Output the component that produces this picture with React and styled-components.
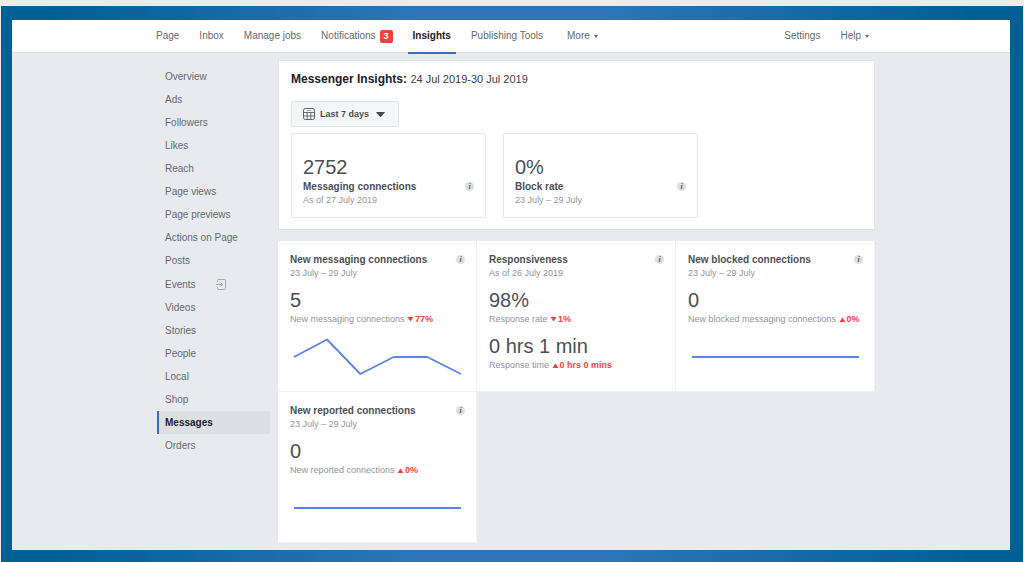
import React from "react";
import styled, { createGlobalStyle, css } from "styled-components";

const color = {
  page: "#e9eaee",
  text: "#65696f",
  dark: "#1d2129",
  strong: "#4b4f56",
  muted: "#90949c",
  blue: "#4267c8",
  line: "#5b82e8",
  red: "#fa3e3e",
};

const GlobalStyle = createGlobalStyle`
  *, *::before, *::after { box-sizing: border-box; }
  body {
    margin: 0;
    background: #eaebed;
    color: ${color.text};
    font: 10px/14px "Liberation Sans", Arial, sans-serif;
  }
  h1, h2, p, ul { margin: 0; padding: 0; }
  ul { list-style: none; }
  a { color: inherit; text-decoration: none; }
  button { border: 0; padding: 0; background: none; color: inherit; font: inherit; cursor: pointer; }
  svg { display: block; }
`;

const Frame = styled.div`
  margin: 6px 1px 0;
  min-height: calc(100vh - 6px);
  padding: 14px 13px 12px 11px;
  display: flex;
  background: linear-gradient(90deg, #006094 5%, #2f76b8 42%, #2f76b8 58%, #006094 95%);
`;

const Page = styled.div`
  flex: 1;
  min-width: 0;
  background: ${color.page};
`;

const TopBar = styled.header`
  background: #fff;
  border-bottom: 1px solid #dfe1e5;
`;

const Container = styled.div`
  max-width: 730px;
  margin: 0 auto;
`;

const Nav = styled.nav`
  display: flex;
  justify-content: space-between;
  height: 32px;
  padding: 0 2px 0 5px;
`;

const NavGroup = styled.div`
  display: flex;
  gap: 10px;
`;

const navItem = css`
  display: flex;
  align-items: center;
  gap: 4px;
  height: 34px;
  padding: 0 5px;
  border-bottom: 2px solid transparent;
`;

const NavLink = styled.a`
  ${navItem}
  ${(p) =>
    p.$active &&
    css`
      color: ${color.dark};
      font-weight: bold;
      border-bottom-color: ${color.blue};
    `}
`;

const NavMenu = styled.button`
  ${navItem}
  margin-left: ${(p) => (p.$apart ? "4px" : "0")};
`;

const Badge = styled.span`
  padding: 0 4px;
  border-radius: 2px;
  background: ${color.red};
  color: #fff;
  font-size: 9px;
  line-height: 13px;
  font-weight: bold;
`;

const Body = styled(Container)`
  display: flex;
  align-items: flex-start;
  gap: 8px;
  padding: 7px 1px 6px 11px;
`;

const Sidebar = styled.nav`
  flex: 0 0 113px;
  padding-top: 5px;
`;

const SideLink = styled.a`
  display: flex;
  align-items: center;
  gap: 20px;
  height: ${(p) => (p.$tall ? "24px" : "23px")};
  padding: 1px 0 0 6px;
  border-left: 2px solid transparent;
  ${(p) =>
    p.$active &&
    css`
      color: ${color.dark};
      font-weight: bold;
      background: #dddfe3;
      border-left-color: ${color.blue};
    `}
`;

const Main = styled.main`
  flex: 1;
  min-width: 0;
  display: grid;
  gap: 11px;
`;

const Panel = styled.section`
  padding: 10px 12px 11px;
  border: 1px solid #e2e4e8;
  background: #fff;
`;

const Heading = styled.h1`
  color: ${color.dark};
  font-size: 12px;
  line-height: 16px;
  font-weight: bold;
`;

const Dates = styled.span`
  color: #3a3e45;
  font-size: 11px;
  font-weight: normal;
`;

const RangePicker = styled.div`
  display: inline-grid;
  grid-template-columns: 28px auto 28px;
  align-items: center;
  margin: 14px 0 6px;
  vertical-align: top;

  svg {
    grid-row: 1;
    justify-self: center;
    z-index: 1;
    pointer-events: none;
  }
  svg:first-child { grid-column: 1; justify-self: end; margin-right: 4px; }
  svg:last-child { grid-column: 3; margin-right: 10px; }
`;

const RangeSelect = styled.select`
  grid-area: 1 / 1 / 2 / -1;
  appearance: none;
  width: 108px;
  height: 26px;
  padding: 0 28px;
  border: 1px solid #dfe2e6;
  border-radius: 1px;
  background: #f5f6f7;
  color: ${color.strong};
  font: bold 9px "Liberation Sans", Arial, sans-serif;
`;

const Stats = styled.div`
  display: grid;
  grid-template-columns: 195px 195px;
  gap: 17px;
`;

const Stat = styled.article`
  padding: 21px 11px 10px;
  border: 1px solid #e5e7eb;
  border-radius: 2px;
`;

const Row = styled.div`
  display: flex;
  align-items: center;
  justify-content: space-between;
`;

const Label = styled.h2`
  padding-top: 1px;
  color: ${color.strong};
  font-size: 10px;
  line-height: 13px;
  font-weight: bold;
`;

const Small = styled.p`
  color: ${color.muted};
  font-size: 9px;
  line-height: 14px;
`;

const Figure = styled.p`
  color: ${color.strong};
  font-size: 20px;
  line-height: 24px;
`;

const Tiles = styled.div`
  display: grid;
  grid-template-columns: repeat(3, 1fr);
`;

const Tile = styled.article`
  min-height: 151px;
  padding: 11px 11px 6px 12px;
  border-right: 1px solid #eff1f5;
  border-bottom: 1px solid #eff1f5;
  background: #fff;

  ${Figure} { margin-top: 8px; }
`;

const Change = styled.span`
  color: ${color.red};
  font-weight: bold;

  svg {
    display: inline-block;
    margin-right: 1px;
    vertical-align: baseline;
  }
`;

const Info = styled.button`
  width: 9px;
  height: 9px;
  border-radius: 50%;
  background: #dddee1;
  color: #55585e;
  font: italic bold 8px/9px "Liberation Serif", serif;
  text-align: center;
`;

const Chart = styled.svg`
  width: 100%;
  height: 58px;
`;

const SmallCaret = () => (
  <svg width="4" height="3" viewBox="0 0 4 3" aria-hidden="true">
    <path d="M0 0h4L2 3z" fill="#65696f" />
  </svg>
);

const Calendar = () => (
  <svg width="12" height="12" viewBox="0 0 12 12" fill="none" stroke="#5c6067" aria-hidden="true">
    <rect x=".5" y=".5" width="11" height="11" rx="1.8" />
    <path d="M1 4.5h10M1 8h10M4.2 4.5V11M7.8 4.5V11" strokeWidth=".9" />
    <path d="M3.5 2.5h5" strokeWidth=".8" opacity=".6" />
  </svg>
);

const ExitIcon = () => (
  <svg width="10" height="11" viewBox="0 0 10 11" fill="none" stroke="#a3a7ae" aria-hidden="true">
    <path d="M1.5 3V1.3Q1.5.5 2.3.5h6.4q.8 0 .8.8v8.4q0 .8-.8.8H2.3q-.8 0-.8-.8V8" />
    <path d="M0 5.5h6.5M4.5 3.5l2 2-2 2" />
  </svg>
);

const InfoButton = () => <Info type="button" aria-label="More information">i</Info>;

const Trend = ({ up, children }) => (
  <Change>
    <svg width="7" height="5" viewBox="0 0 7 5" aria-hidden="true">
      <path d={up ? "M.5 5h6L3.5.5z" : "M.5 0h6L3.5 4.5z"} fill={color.red} />
    </svg>
    {children}
  </Change>
);

const LineChart = ({ points, name }) => (
  <Chart viewBox="0 0 175 58" role="img" aria-label={name}>
    <polyline points={points} fill="none" stroke={color.line} strokeWidth="1.8" strokeLinejoin="round" />
  </Chart>
);

const FLAT = "4,31 171,31";

const tiles = [
  {
    title: "New messaging connections",
    date: "23 July – 29 July",
    metrics: [{ value: "5", label: "New messaging connections", change: "77%" }],
    points: "4,31 37,13.5 70.3,48 103.7,31 137.3,31 171,48",
  },
  {
    title: "Responsiveness",
    date: "As of 26 July 2019",
    metrics: [
      { value: "98%", label: "Response rate", change: "1%" },
      { value: "0 hrs 1 min", label: "Response time", change: "0 hrs 0 mins", up: true },
    ],
  },
  {
    title: "New blocked connections",
    date: "23 July – 29 July",
    metrics: [{ value: "0", label: "New blocked messaging connections", change: "0%", up: true }],
    points: FLAT,
  },
  {
    title: "New reported connections",
    date: "23 July – 29 July",
    metrics: [{ value: "0", label: "New reported connections", change: "0%", up: true }],
    points: FLAT,
  },
];

const stats = [
  { value: "2752", label: "Messaging connections", date: "As of 27 July 2019" },
  { value: "0%", label: "Block rate", date: "23 July – 29 July" },
];

const sections = [
  "Overview", "Ads", "Followers", "Likes", "Reach", "Page views", "Page previews",
  "Actions on Page", "Posts", "Events", "Videos", "Stories", "People", "Local",
  "Shop", "Messages", "Orders",
];

export default function App() {
  return (
    <>
      <GlobalStyle />
      <Frame>
        <Page>
          <TopBar>
            <Container>
              <Nav aria-label="Page tools">
                <NavGroup>
                  <NavLink href="#page">Page</NavLink>
                  <NavLink href="#inbox">Inbox</NavLink>
                  <NavLink href="#jobs">Manage jobs</NavLink>
                  <NavLink href="#notifications">
                    Notifications <Badge>3</Badge>
                  </NavLink>
                  <NavLink href="#insights" $active aria-current="page">Insights</NavLink>
                  <NavLink href="#publishing">Publishing Tools</NavLink>
                  <NavMenu type="button" aria-haspopup="menu" $apart>
                    More <SmallCaret />
                  </NavMenu>
                </NavGroup>
                <NavGroup>
                  <NavLink href="#settings">Settings</NavLink>
                  <NavMenu type="button" aria-haspopup="menu">
                    Help <SmallCaret />
                  </NavMenu>
                </NavGroup>
              </Nav>
            </Container>
          </TopBar>
          <Body>
            <Sidebar aria-label="Insights sections">
              <ul>
                {sections.map((name) => (
                  <li key={name}>
                    <SideLink
                      href={"#" + name.toLowerCase().replace(/ /g, "-")}
                      $active={name === "Messages"}
                      $tall={name === "Events"}
                    >
                      {name}
                      {name === "Events" && <ExitIcon />}
                    </SideLink>
                  </li>
                ))}
              </ul>
            </Sidebar>
            <Main>
              <Panel>
                <Heading>
                  Messenger Insights: <Dates>24 Jul 2019-30 Jul 2019</Dates>
                </Heading>
                <RangePicker>
                  <Calendar />
                  <RangeSelect aria-label="Date range" defaultValue="7">
                    <option value="7">Last 7 days</option>
                  </RangeSelect>
                  <svg width="9" height="5" viewBox="0 0 9 5" aria-hidden="true">
                    <path d="M.6 0h7.8q.6.2.2.8L5.2 4.6q-.7.6-1.4 0L.4.8Q0 .2.6 0z" fill="#44484e" />
                  </svg>
                </RangePicker>
                <Stats>
                  {stats.map((s) => (
                    <Stat key={s.label}>
                      <Figure>{s.value}</Figure>
                      <Row>
                        <Label>{s.label}</Label>
                        <InfoButton />
                      </Row>
                      <Small>{s.date}</Small>
                    </Stat>
                  ))}
                </Stats>
              </Panel>
              <Tiles>
                {tiles.map((t) => (
                  <Tile key={t.title}>
                    <Row>
                      <Label>{t.title}</Label>
                      <InfoButton />
                    </Row>
                    <Small>{t.date}</Small>
                    {t.metrics.map((m) => (
                      <React.Fragment key={m.label}>
                        <Figure>{m.value}</Figure>
                        <Small>
                          {m.label} <Trend up={m.up}>{m.change}</Trend>
                        </Small>
                      </React.Fragment>
                    ))}
                    {t.points && <LineChart points={t.points} name={t.title} />}
                  </Tile>
                ))}
              </Tiles>
            </Main>
          </Body>
        </Page>
      </Frame>
    </>
  );
}
